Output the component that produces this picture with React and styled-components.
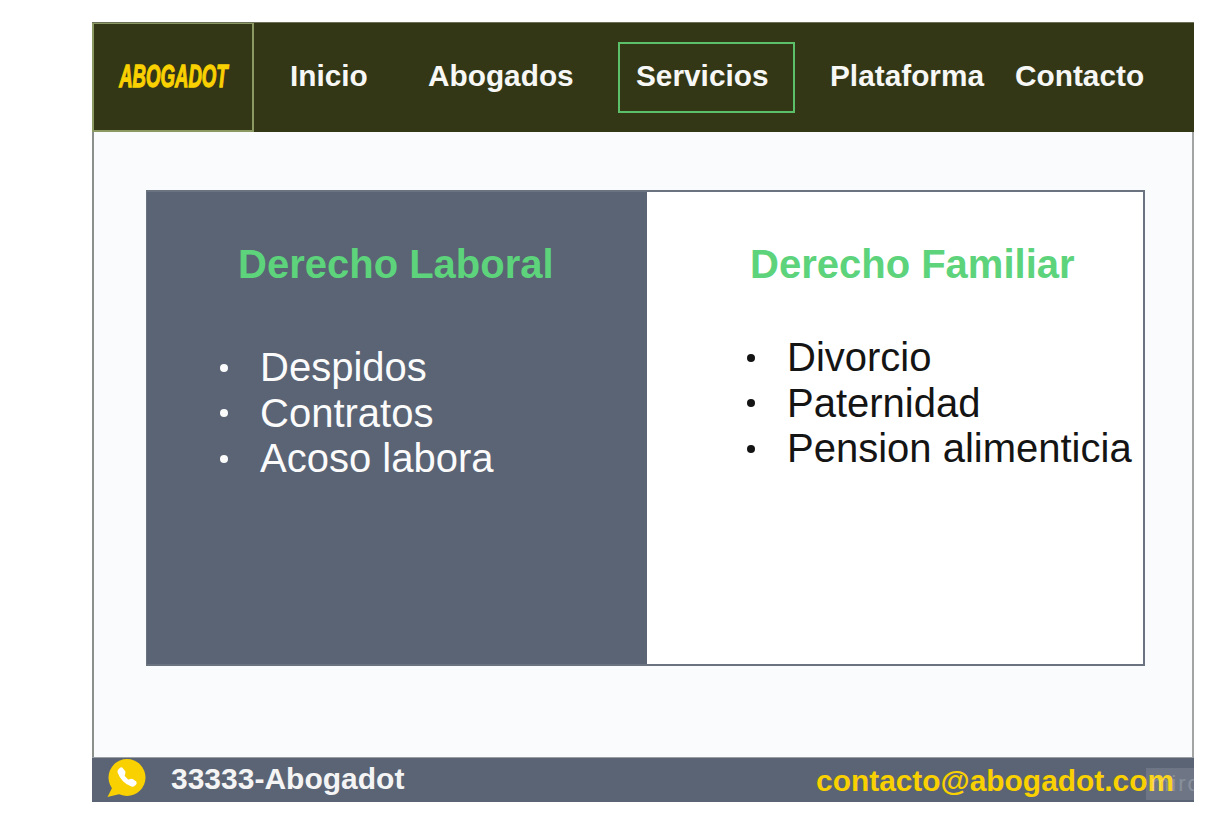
import React from "react";
import styled, { createGlobalStyle } from "styled-components";

const Global = createGlobalStyle`
  html, body { margin: 0; padding: 0; background: #fff; }
  body { font-family: "Liberation Sans", Arial, sans-serif; }
`;

const Page = styled.div`
  width: 1222px;
  height: 818px;
  box-sizing: border-box;
  padding: 22px 28px 16px 92px;
  overflow: hidden;
`;

const Frame = styled.div`
  position: relative;
  height: 780px;
  display: flex;
  flex-direction: column;
  background: #fafbfd;
`;

const Header = styled.header`
  flex: 0 0 110px;
  display: grid;
  grid-template-columns: 162px 36px 138px 190px 212px 185px 1fr;
  align-items: center;
  background: #333716;
  color: #f7f7f5;
  border-top: 1px solid #6c7058;
  box-sizing: border-box;
`;

const Logo = styled.div`
  height: 109px;
  box-sizing: border-box;
  border: 2px solid #8b9a63;
  border-top-width: 1px;
  display: flex;
  align-items: center;
  justify-content: center;
  overflow: hidden;
`;

const LogoText = styled.span`
  display: block;
  font-size: 31px;
  font-weight: 700;
  font-style: italic;
  color: #f9d000;
  -webkit-text-stroke: 1.3px #f9d000;
  transform: scaleX(0.6);
  white-space: nowrap;
  margin-left: 1px;
`;

const Spacer = styled.div``;

const NavItem = styled.a`
  font-size: 29.8px;
  font-weight: 700;
  line-height: 34px;
  white-space: nowrap;
  margin-top: -3px;
`;

const ActiveItem = styled(NavItem)`
  width: 177px;
  height: 71px;
  margin-top: 0;
  box-sizing: border-box;
  border: 2px solid #5cbf69;
  padding: 0 0 4px 16px;
  display: flex;
  align-items: center;
`;

const Main = styled.main`
  flex: 1;
  box-sizing: border-box;
  padding: 58px 47px 91px 54px;
  border-left: 2px solid #8c908d;
  border-right: 2px solid #a2a5a3;
  display: flex;
`;

const Panels = styled.section`
  flex: 1;
  display: grid;
  grid-template-columns: 500px 1fr;
  border: 2px solid #6b7280;
  border-left-width: 1px;
  margin-left: -2px;
`;

const Panel = styled.div`
  background: ${(p) => p.$bg};
  color: ${(p) => p.$fg};
  padding: ${(p) => p.$pad};
  box-sizing: border-box;
`;

const Title = styled.h2`
  margin: 0;
  color: #5dd37b;
  font-size: 40px;
  font-weight: 700;
  line-height: 48px;
  white-space: nowrap;
`;

const List = styled.ul`
  list-style: none;
  margin: ${(p) => p.$top}px 0 0 ${(p) => p.$left}px;
  padding: 0;
`;

const Item = styled.li`
  display: flex;
  align-items: center;
  height: 45.5px;
  font-size: 40px;
  white-space: nowrap;
`;

const Dot = styled.span`
  flex: 0 0 auto;
  width: 8px;
  height: 8px;
  border-radius: 50%;
  background: currentColor;
  margin-right: 32px;
`;

const Footer = styled.footer`
  flex: 0 0 45px;
  display: flex;
  align-items: center;
  justify-content: space-between;
  background: #5a6475;
  border-top: 1px solid #9a9fa6;
  box-sizing: border-box;
  padding: 0 20px 0 15px;
`;

const Phone = styled.div`
  display: flex;
  align-items: center;
  gap: 25px;
  color: #f4f4f4;
  font-size: 30px;
  font-weight: 700;
  margin-top: -3px;
`;

const Email = styled.div`
  color: #f9d000;
  font-size: 29.9px;
  font-weight: 700;
  white-space: nowrap;
  margin-top: 1px;
`;

const Watermark = styled.div`
  position: absolute;
  right: 0;
  bottom: 2px;
  width: 48px;
  height: 32px;
  background: rgba(255, 255, 255, 0.12);
  color: rgba(255, 255, 255, 0.2);
  font-size: 22px;
  letter-spacing: 2px;
  line-height: 32px;
  padding-left: 5px;
  box-sizing: border-box;
  overflow: hidden;
  white-space: nowrap;
`;

const WhatsIcon = () => (
  <svg width="39" height="39" viewBox="0 0 39 39" aria-hidden="true">
    <circle cx="20" cy="18.5" r="18.5" fill="#f9d000" />
    <path d="M6 27 L0.5 38 L15 34.5 Z" fill="#f9d000" />
    <g transform="translate(10.5 8.5) scale(1.2)" fill="#fff">
      <path d="M1.885.511a1.745 1.745 0 0 1 2.61.163L6.29 2.98c.329.423.445.974.315 1.494l-.547 2.19a.678.678 0 0 0 .178.643l2.457 2.457a.678.678 0 0 0 .644.178l2.189-.547a1.745 1.745 0 0 1 1.494.315l2.306 1.794c.829.645.905 1.87.163 2.611l-1.034 1.034c-.74.74-1.846 1.065-2.877.702a18.634 18.634 0 0 1-7.01-4.42 18.634 18.634 0 0 1-4.42-7.009c-.362-1.03-.037-2.137.703-2.877L1.885.511z" />
    </g>
  </svg>
);

export default function App() {
  return (
    <>
      <Global />
      <Page>
        <Frame>
          <Header>
            <Logo>
              <LogoText>ABOGADOT</LogoText>
            </Logo>
            <Spacer />
            <NavItem>Inicio</NavItem>
            <NavItem>Abogados</NavItem>
            <ActiveItem>Servicios</ActiveItem>
            <NavItem>Plataforma</NavItem>
            <NavItem>Contacto</NavItem>
          </Header>
          <Main>
            <Panels>
              <Panel $bg="#5a6475" $fg="#fbfbfb" $pad="48px 0 0 91px">
                <Title>Derecho Laboral</Title>
                <List $top={57} $left={-18}>
                  <Item><Dot />Despidos</Item>
                  <Item><Dot />Contratos</Item>
                  <Item><Dot />Acoso labora</Item>
                </List>
              </Panel>
              <Panel $bg="#ffffff" $fg="#141414" $pad="48px 0 0 103px">
                <Title>Derecho Familiar</Title>
                <List $top={47} $left={-3}>
                  <Item><Dot />Divorcio</Item>
                  <Item><Dot />Paternidad</Item>
                  <Item><Dot />Pension alimenticia</Item>
                </List>
              </Panel>
            </Panels>
          </Main>
          <Footer>
            <Phone>
              <WhatsIcon />
              <span>33333-Abogadot</span>
            </Phone>
            <Email>contacto@abogadot.com</Email>
          </Footer>
          <Watermark>miro</Watermark>
        </Frame>
      </Page>
    </>
  );
}
